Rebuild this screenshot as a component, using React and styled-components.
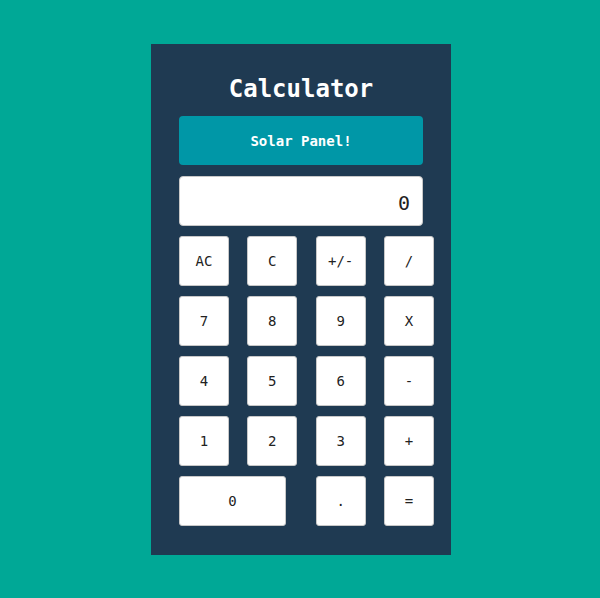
import React from "react";
import styled, { createGlobalStyle } from "styled-components";

const Global = createGlobalStyle`
  html, body { margin: 0; padding: 0; }
  body {
    background: #00a896;
    font-family: "DejaVu Sans Mono", "Liberation Mono", monospace;
    width: 600px;
    height: 598px;
  }
`;

const Page = styled.div`
  padding-top: 44px;
  padding-left: 151px;
`;

const Card = styled.div`
  width: 300px;
  height: 511px;
  box-sizing: border-box;
  background: #1f3a52;
  padding: 29px 0 0 28px;
  display: flex;
  flex-direction: column;
`;

const Title = styled.h1`
  margin: 0;
  width: 244px;
  text-align: center;
  color: #ffffff;
  font-size: 24px;
  font-weight: bold;
  line-height: 33px;
  height: 33px;
  margin-bottom: 10px;
`;

const Solar = styled.div`
  width: 244px;
  height: 49px;
  box-sizing: border-box;
  background: #0097a7;
  border-radius: 4px;
  color: #ffffff;
  font-size: 14px;
  font-weight: bold;
  display: flex;
  align-items: center;
  justify-content: center;
  margin-bottom: 11px;
`;

const Display = styled.div`
  width: 244px;
  height: 50px;
  box-sizing: border-box;
  background: #ffffff;
  border: 1px solid #c8c8c8;
  border-radius: 4px;
  color: #222;
  font-size: 20px;
  display: flex;
  align-items: center;
  justify-content: flex-end;
  padding: 4px 12px 0 0;
  margin-bottom: 10px;
`;

const Keys = styled.div`
  display: grid;
  grid-template-columns: repeat(4, 50px);
  grid-auto-rows: 50px;
  column-gap: 18.33px;
  row-gap: 10px;
`;

const Key = styled.button`
  width: ${(p) => (p.$wide ? "107px" : "50px")};
  height: 50px;
  grid-column: ${(p) => (p.$wide ? "span 2" : "auto")};
  justify-self: start;
  background: #ffffff;
  border: 1px solid #c8c8c8;
  border-radius: 3px;
  color: #222;
  font-family: "DejaVu Sans Mono", "Liberation Mono", monospace;
  font-size: 14px;
  padding: 0;
  cursor: pointer;
`;

const keys = [
  "AC", "C", "+/-", "/",
  "7", "8", "9", "X",
  "4", "5", "6", "-",
  "1", "2", "3", "+",
];

export default function App() {
  return (
    <>
      <Global />
      <Page>
        <Card>
          <Title>Calculator</Title>
          <Solar>Solar Panel!</Solar>
          <Display>0</Display>
          <Keys>
            {keys.map((k) => (
              <Key key={k}>{k}</Key>
            ))}
            <Key $wide>0</Key>
            <Key>.</Key>
            <Key>=</Key>
          </Keys>
        </Card>
      </Page>
    </>
  );
}
